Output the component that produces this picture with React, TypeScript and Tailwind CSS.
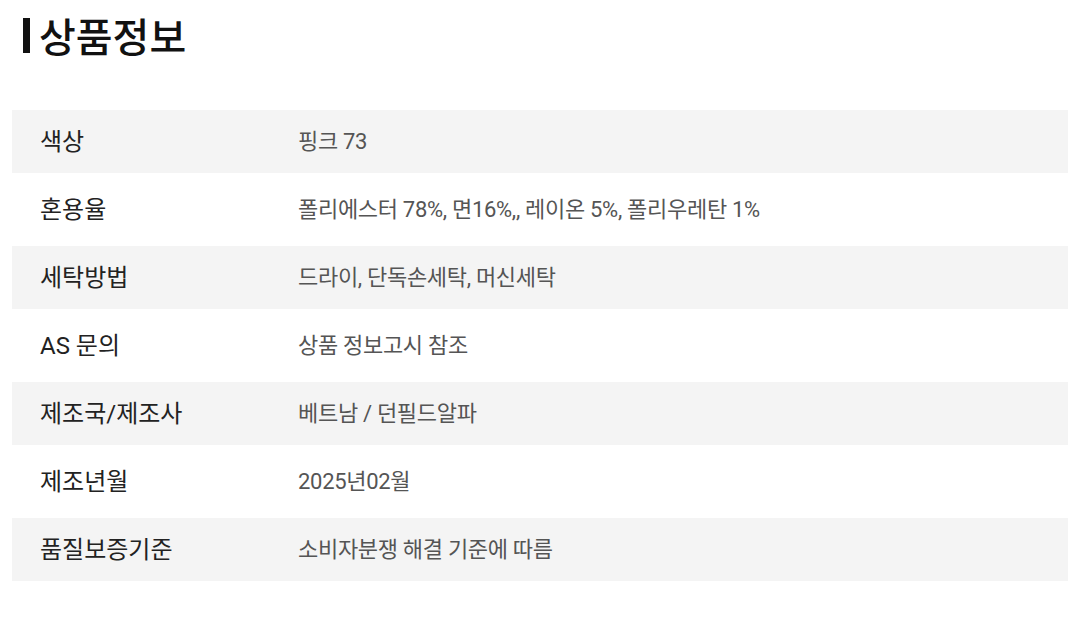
import React from 'react';

const rows = [
  { label: '색상', value: '핑크 73' },
  { label: '혼용율', value: '폴리에스터 78%, 면16%,, 레이온 5%, 폴리우레탄 1%' },
  { label: '세탁방법', value: '드라이, 단독손세탁, 머신세탁' },
  { label: 'AS 문의', value: '상품 정보고시 참조' },
  { label: '제조국/제조사', value: '베트남 / 던필드알파' },
  { label: '제조년월', value: '2025년02월' },
  { label: '품질보증기준', value: '소비자분쟁 해결 기준에 따름' },
];

export default function App() {
  return (
    <div className="w-[1080px] h-[622px] bg-white font-['Noto_Sans_CJK_KR','Noto_Sans',sans-serif]">
      {/* Title */}
      <div className="h-[70px] flex items-center pl-[23px] gap-[9px]">
        <span className="w-[7px] h-[35px] bg-[#111]" />
        <h2 className="text-[40px] leading-none font-medium text-[#111]">상품정보</h2>
      </div>

      {/* Info table */}
      <div className="mt-[40px] mx-[12px]">
        {rows.map((row, idx) => (
          <div
            key={idx}
            className={
              idx % 2 === 0
                ? 'grid grid-cols-[286px_1fr] items-center h-[63px] bg-[#f4f4f4]'
                : 'grid grid-cols-[286px_1fr] items-center h-[73px] bg-white'
            }
          >
            <div className="pl-[28px] text-[24px] text-[#222] font-['Roboto','Noto_Sans_CJK_KR',sans-serif]">{row.label}</div>
            <div className="text-[22px] text-[#555] tracking-[-0.3px] font-['Roboto','Noto_Sans_CJK_KR',sans-serif]">{row.value}</div>
          </div>
        ))}
      </div>
    </div>
  );
}
